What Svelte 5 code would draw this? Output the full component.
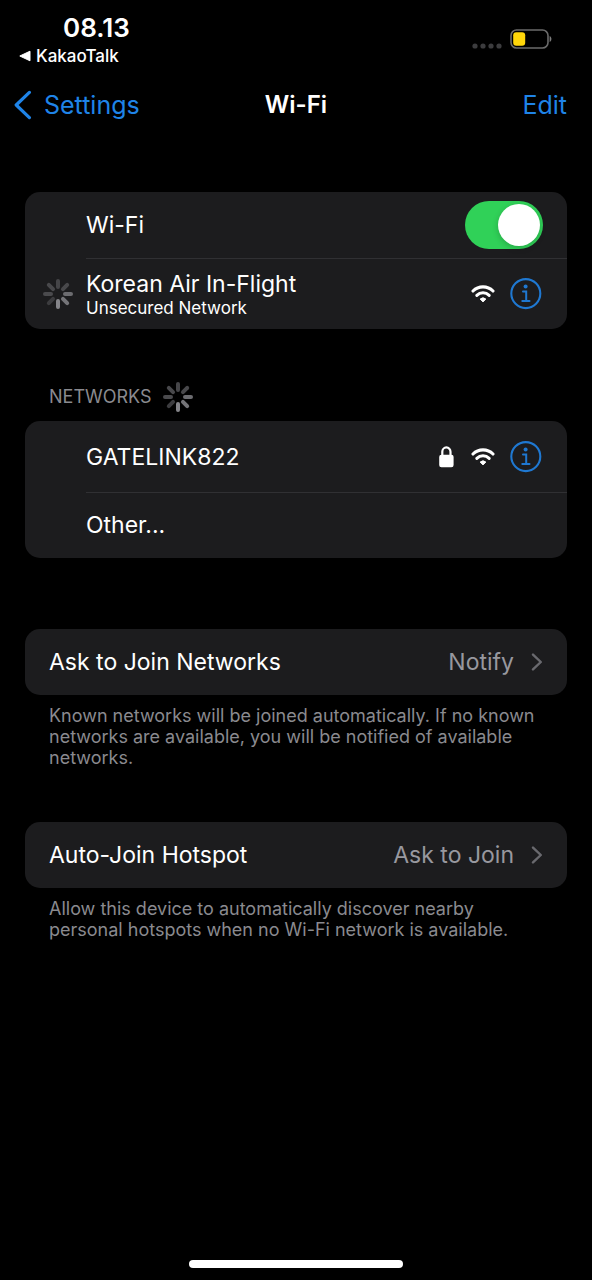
<script lang="ts">
  let wifiOn = $state(true);

  // Spoke shades, clockwise from the top
  const spokes = ['#454548', '#48484b', '#6c6c70', '#747478', '#85858a', '#3c3c3f', '#4a4a4d', '#48484b'];
</script>

{#snippet spinner()}
  <svg class="spinner" viewBox="0 0 30 30" role="img" aria-label="Loading">
    {#each spokes as shade, i}
      <line x1="15" y1="2" x2="15" y2="8" stroke={shade} stroke-width="4" stroke-linecap="round" transform="rotate({i * 45} 15 15)" />
    {/each}
  </svg>
{/snippet}

{#snippet wifiIcon()}
  <svg class="wifi" viewBox="0 0 24 18" fill="none" stroke="#fff" role="img" aria-label="Signal strength">
    <path d="M2 6a14.3 14.3 0 0 1 20 0" stroke-width="3.1" stroke-linecap="round" />
    <path d="M5.8 10.4a8.8 8.8 0 0 1 12.4 0" stroke-width="3" stroke-linecap="round" />
    <path d="M12 16.9 9.1 14.1a4.2 4.2 0 0 1 5.8 0z" fill="#fff" stroke-width="0.9" stroke-linejoin="round" />
  </svg>
{/snippet}

{#snippet infoButton(name: string)}
  <button class="info" type="button" aria-label="More info about {name}">
    <svg viewBox="0 0 33 32" fill="none" stroke="currentColor">
      <circle cx="15.8" cy="15.6" r="14.5" stroke-width="2.1" />
      <circle cx="15.6" cy="8.6" r="2" fill="currentColor" stroke="none" />
      <path d="M13 13.5h3.2v9.4M12.3 23h7.2" stroke-width="2" stroke-linecap="round" />
    </svg>
  </button>
{/snippet}

{#snippet chevron()}
  <svg class="chevron" viewBox="0 0 12 18" fill="none" stroke="#69696e" stroke-width="2.4" stroke-linecap="round" stroke-linejoin="round">
    <path d="M2 1.6 9.8 9 2 16.4" />
  </svg>
{/snippet}

<div class="screen">
  <header>
    <div class="status">
      <div class="status-left">
        <time>08.13</time>
        <a class="return" href="#kakaotalk">
          <svg viewBox="0 0 12 12"><path d="M11 1.2v9.6L.8 6z" fill="#fff" stroke="#fff" stroke-linejoin="round" /></svg>
          KakaoTalk
        </a>
      </div>
      <div class="status-right">
        <svg class="dots" viewBox="0 0 30 6" fill="#3c3c3e">
          {#each [3, 11, 19, 27] as cx}
            <circle {cx} cy="3" r="2.6" />
          {/each}
        </svg>
        <svg class="battery" viewBox="0 0 42 20">
          <rect x="1" y="1" width="37" height="18" rx="5.5" fill="none" stroke="#6b6b6b" stroke-width="1.6" />
          <rect x="3.2" y="3.2" width="12" height="13.6" rx="3" fill="#ffd60a" />
          <path d="M39.6 7c2.4.8 2.4 5.2 0 6z" fill="#7d7d7d" />
        </svg>
      </div>
    </div>

    <nav>
      <a class="back" href="#settings">
        <svg viewBox="0 0 18 30" fill="none" stroke="currentColor" stroke-width="3.2" stroke-linecap="round" stroke-linejoin="round">
          <path d="M15.4 2.4 2.2 15l13.2 12.6" />
        </svg>
        Settings
      </a>
      <h1>Wi-Fi</h1>
      <button class="edit" type="button">Edit</button>
    </nav>
  </header>

  <main>
    <section class="card">
      <div class="row inset">
        <label for="wifi-switch">Wi-Fi</label>
        <input id="wifi-switch" class="switch" type="checkbox" role="switch" bind:checked={wifiOn} />
      </div>
      <div class="row tall">
        <div class="lead">{@render spinner()}</div>
        <div class="name">
          <span>Korean Air In-Flight</span>
          <small>Unsecured Network</small>
        </div>
        {@render wifiIcon()}
        {@render infoButton('Korean Air In-Flight')}
      </div>
    </section>

    <h2>NETWORKS {@render spinner()}</h2>
    <section class="card">
      <div class="row inset tall">
        <span class="name">GATELINK822</span>
        <svg class="lock" viewBox="0 0 15 22" role="img" aria-label="Secured">
          <rect x="0.2" y="8.8" width="14.4" height="12.4" rx="2.2" fill="#fff" />
          <path d="M3.3 10V5.8a4.1 4.4 0 0 1 8.2 0V10" fill="none" stroke="#fff" stroke-width="2.2" />
        </svg>
        {@render wifiIcon()}
        {@render infoButton('GATELINK822')}
      </div>
      <button class="row inset" type="button">Other...</button>
    </section>

    <section class="group">
      <button class="card row link" type="button">
        <span class="name">Ask to Join Networks</span>
        <span class="value">Notify</span>
        {@render chevron()}
      </button>
      <p>
        Known networks will be joined automatically. If no known networks are available, you will be
        notified of available networks.
      </p>
    </section>

    <section class="group">
      <button class="card row link" type="button">
        <span class="name">Auto-Join Hotspot</span>
        <span class="value">Ask to Join</span>
        {@render chevron()}
      </button>
      <p>
        Allow this device to automatically discover nearby personal hotspots when no Wi-Fi network is
        available.
      </p>
    </section>
  </main>

  <div class="home-bar"></div>
</div>

<style>
  :global(body) {
    margin: 0;
    background: #000;
  }

  .screen {
    box-sizing: border-box;
    display: flex;
    flex-direction: column;
    min-height: 100vh;
    padding-bottom: 12px;
    background: #000;
    color: #fff;
    font-family: Inter, 'Liberation Sans', sans-serif;
    font-size: 23px;
    line-height: 28px;
  }

  button {
    margin: 0;
    padding: 0;
    border: 0;
    background: none;
    color: inherit;
    font: inherit;
    text-align: left;
    cursor: pointer;
  }

  a {
    color: inherit;
    text-decoration: none;
  }

  svg {
    display: block;
    flex: none;
  }

  .status {
    display: flex;
    justify-content: space-between;
    padding: 14px 40px 0 19px;
  }

  time {
    display: block;
    padding-left: 44px;
    font-size: 26px;
    font-weight: 600;
  }

  .return {
    display: flex;
    align-items: center;
    gap: 5px;
    font-size: 17px;
    font-weight: 500;
  }

  .return svg {
    width: 12px;
    height: 12px;
  }

  .status-right {
    display: flex;
    align-items: flex-start;
    gap: 8px;
    padding-top: 15px;
  }

  .dots {
    width: 30px;
    height: 6px;
    margin-top: 14px;
  }

  .battery {
    width: 42px;
    height: 20px;
  }

  nav {
    display: grid;
    grid-template-columns: 1fr auto 1fr;
    align-items: center;
    height: 70px;
    padding: 0 25px;
  }

  .back,
  .edit {
    color: #1f84e8;
    font-size: 25px;
  }

  .back {
    display: flex;
    align-items: center;
    gap: 12px;
    margin-left: -11px;
  }

  .back svg {
    width: 18px;
    height: 30px;
  }

  .edit {
    justify-self: end;
  }

  h1 {
    margin: 0;
    font-size: 24px;
    font-weight: 600;
  }

  main {
    flex: 1;
    padding: 52px 25px 0;
  }

  .card {
    overflow: hidden;
    border-radius: 15px;
    background: #1c1c1e;
  }

  .row {
    box-sizing: border-box;
    display: flex;
    align-items: center;
    width: 100%;
    min-height: 66px;
    padding-right: 24px;
  }

  .row.tall {
    min-height: 71px;
  }

  .row.inset {
    padding-left: 61px;
  }

  .row + .row {
    background: linear-gradient(#303033, #303033) 61px 0 / 100% 1px no-repeat;
  }

  .row label,
  .name {
    flex: 1;
  }

  .lead {
    display: flex;
    justify-content: center;
    width: 61px;
    padding-left: 18px;
    padding-right: 13px;
    box-sizing: border-box;
  }

  .name small {
    display: block;
    font-size: 17px;
    line-height: 20px;
  }

  .spinner {
    width: 30px;
    height: 30px;
  }

  .wifi {
    width: 24px;
    height: 18px;
    margin-right: 15px;
  }

  .lock {
    width: 15px;
    height: 22px;
    margin-right: 17px;
  }

  .info {
    color: #1f78d1;
  }

  .info svg {
    width: 33px;
    height: 32px;
  }

  .switch {
    appearance: none;
    display: flex;
    width: 78px;
    height: 48px;
    margin: 0;
    padding: 3px;
    box-sizing: border-box;
    border-radius: 24px;
    background: #39393d;
    cursor: pointer;
  }

  .switch::before {
    content: '';
    width: 42px;
    height: 42px;
    border-radius: 50%;
    background: #fff;
    box-shadow: 0 2px 6px rgb(0 0 0 / 20%);
  }

  .switch:checked {
    justify-content: flex-end;
    background: #30d158;
  }

  h2 {
    display: flex;
    align-items: center;
    gap: 11px;
    margin: 53px 0 9px 24px;
    color: #8a8a8f;
    font-size: 18px;
    font-weight: 400;
    line-height: 30px;
  }

  .group {
    margin-top: 71px;
  }

  .group + .group {
    margin-top: 54px;
  }

  .link {
    padding-left: 24px;
  }

  .value {
    color: #98989f;
  }

  .chevron {
    width: 12px;
    height: 18px;
    margin-left: 17px;
  }

  p {
    margin: 10px 24px 0;
    color: #8a8a8f;
    font-size: 18px;
    line-height: 21px;
  }

  .home-bar {
    align-self: center;
    width: 36%;
    height: 8px;
    border-radius: 4px;
    background: #fff;
  }
</style>
